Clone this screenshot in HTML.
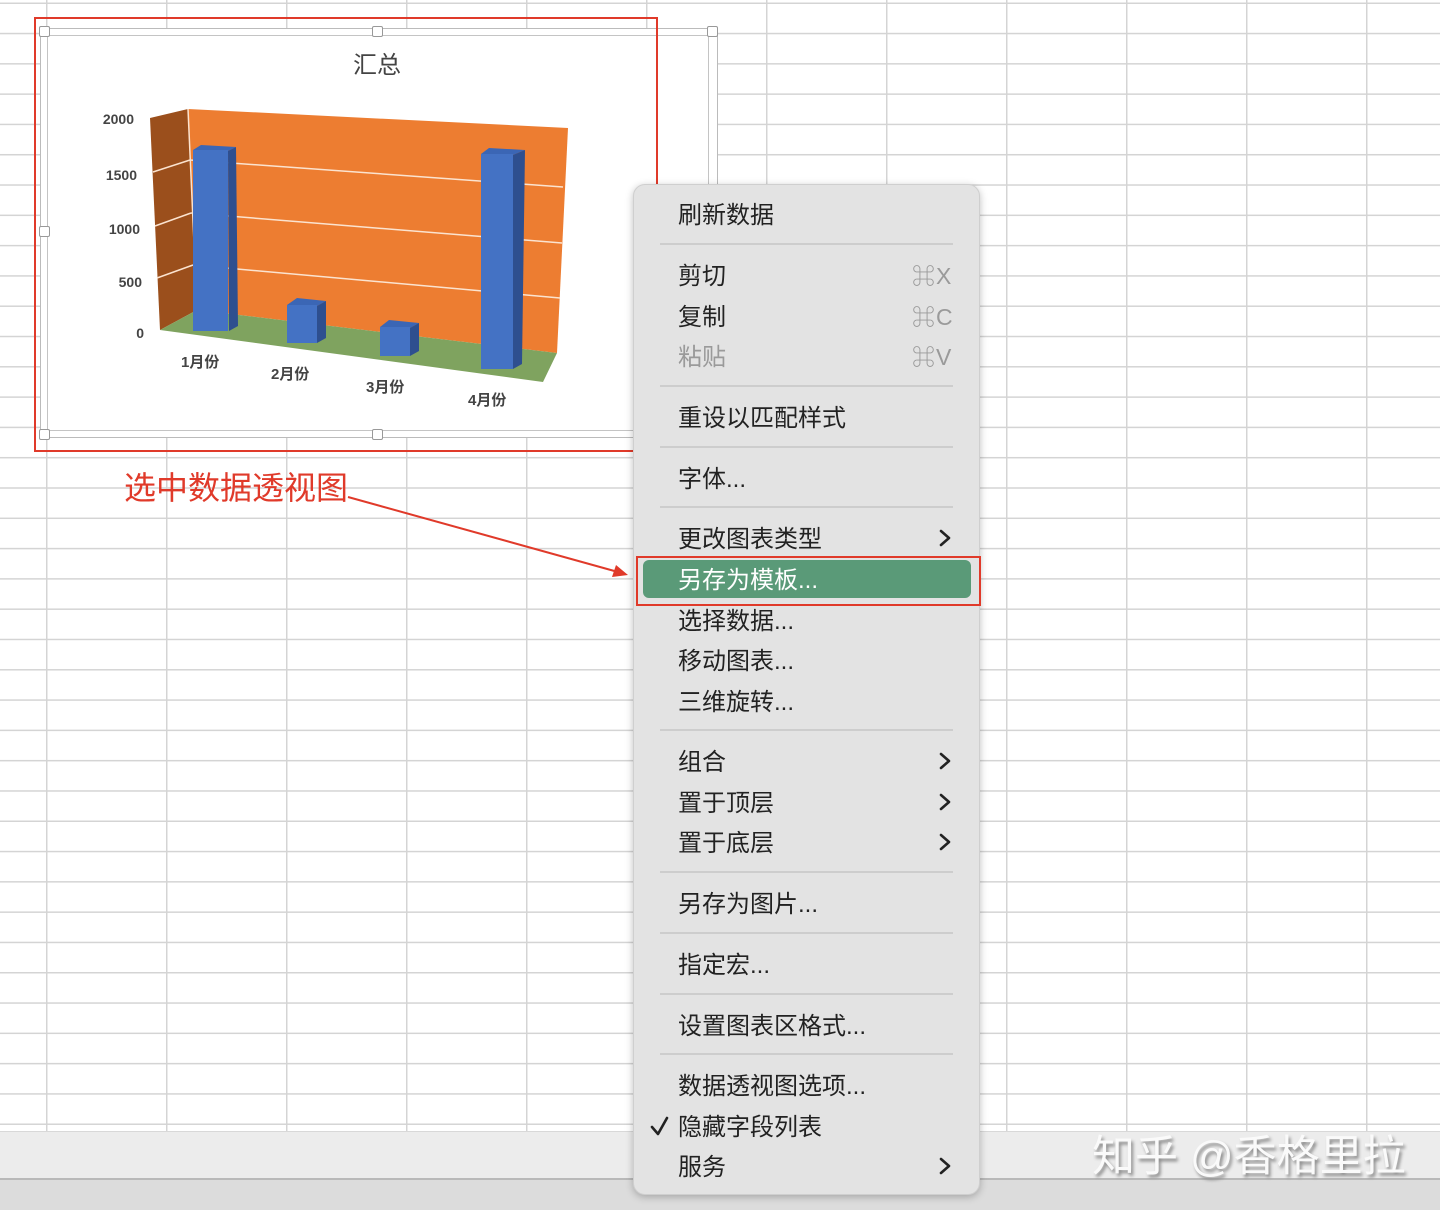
<!DOCTYPE html>
<html><head><meta charset="utf-8"><style>
*{margin:0;padding:0;box-sizing:border-box}
body{width:1440px;height:1210px;position:relative;overflow:hidden;background:#fff;font-family:"Liberation Sans","Noto Sans CJK SC",sans-serif}
.grid{position:absolute;left:0;top:0;width:1440px;height:1131px;
background-image:linear-gradient(to right,#d4d4d4 0,#d4d4d4 1.5px,transparent 1.5px),linear-gradient(to bottom,#d4d4d4 0,#d4d4d4 1.5px,transparent 1.5px);
background-size:120px 100%,100% 30.3px;background-position:46px 0,0 2.5px}
.bar1{position:absolute;left:0;top:1131px;width:1440px;height:47px;background:#ececec;border-top:1px solid #d8d8d8}
.bar2{position:absolute;left:0;top:1178px;width:1440px;height:32px;background:#dcdcdc;border-top:2px solid #b9b9b9}
.menu{position:absolute;left:633px;top:184px;width:347px;height:1011px;background:#e3e3e3;border-radius:12px;box-shadow:0 2px 8px rgba(0,0,0,.25);border:1px solid #cfcfcf}
.it{position:absolute;left:678px;font-size:24px;color:#222;line-height:34px;white-space:nowrap}
.sc{position:absolute;left:912px;font-size:23px;color:#9a9a9a;line-height:32px;letter-spacing:1px}
.sep{position:absolute;left:660px;width:293px;height:2px;background:#cdcdcd}
.h{position:absolute;width:11px;height:11px;background:#fff;border:1px solid #999;border-radius:2px}
</style></head><body>
<div class="grid"></div>
<div class="bar1"></div><div class="bar2"></div>

<div style="position:absolute;left:40px;top:28px;width:678px;height:410px;background:#fff;border:1px solid #bbb"></div>
<div style="position:absolute;left:47px;top:35px;width:662px;height:396px;border:1px solid #c4c4c4"></div>
<svg style="position:absolute;left:0;top:0" width="720" height="450">
<text x="377" y="73" font-size="24" text-anchor="middle" fill="#444" font-family="Liberation Sans,Noto Sans CJK SC,sans-serif">汇总</text>
<polygon points="150,118 188,109 197,310 160,330" fill="#9b4f1c"/>
<polygon points="188,109 568,128 557,353 197,310" fill="#ed7d31"/>
<polygon points="160,330 197,310 557,353 543,382" fill="#7fa35f"/>
<g stroke="#fbe3cf" stroke-width="1.5">
<line x1="190" y1="160" x2="563" y2="187"/><line x1="191" y1="213" x2="562" y2="243"/><line x1="193" y1="265" x2="560" y2="298"/>
<line x1="153" y1="172" x2="190" y2="160"/><line x1="155" y1="226" x2="191" y2="213"/><line x1="157" y1="278" x2="193" y2="265"/>
<line x1="188" y1="109" x2="197" y2="310"/>
</g>
<g font-size="14" font-weight="bold" fill="#444" text-anchor="end">
<text x="134" y="124">2000</text><text x="137" y="180">1500</text><text x="140" y="234">1000</text><text x="142" y="287">500</text><text x="144" y="338">0</text></g>
<g font-size="15" font-weight="bold" fill="#444" font-family="Liberation Sans,Noto Sans CJK SC,sans-serif">
<text x="181" y="367">1月份</text><text x="271" y="379">2月份</text><text x="366" y="392">3月份</text><text x="468" y="405">4月份</text></g>
<g>
<polygon points="193,150 201,145 236,147 228,151" fill="#3b66b5"/><polygon points="228,151 236,147 238,326 229,331" fill="#2e4f8f"/><rect x="193" y="150" width="35" height="181" fill="#4472c4"/>
<polygon points="287,305 297,298 326,301 317,306" fill="#3b66b5"/><polygon points="317,306 326,301 326,338 317,343" fill="#2e4f8f"/><rect x="287" y="305" width="30" height="38" fill="#4472c4"/>
<polygon points="380,327 389,320 419,323 410,328" fill="#3b66b5"/><polygon points="410,328 419,323 419,351 410,356" fill="#2e4f8f"/><rect x="380" y="327" width="30" height="29" fill="#4472c4"/>
<polygon points="481,154 489,148 525,150 513,155" fill="#3b66b5"/><polygon points="513,155 525,150 522,364 513,369" fill="#2e4f8f"/><rect x="481" y="154" width="32" height="215" fill="#4472c4"/>
</g>
</svg>
<div class="h" style="left:39px;top:26px"></div><div class="h" style="left:372px;top:26px"></div><div class="h" style="left:707px;top:26px"></div>
<div class="h" style="left:39px;top:226px"></div><div class="h" style="left:39px;top:429px"></div><div class="h" style="left:372px;top:429px"></div>
<div style="position:absolute;left:34px;top:17px;width:624px;height:435px;border:2px solid #e03a2a"></div>

<div style="position:absolute;left:124px;top:463px;font-size:32px;color:#e03a2a;white-space:nowrap;font-family:'Liberation Sans','Noto Sans CJK SC',sans-serif">选中数据透视图</div>
<svg style="position:absolute;left:0;top:0" width="700" height="600">
<line x1="348" y1="497" x2="618" y2="572" stroke="#e03a2a" stroke-width="2"/>
<polygon points="628,575 612,577 616,565" fill="#e03a2a"/>
</svg>

<div class="menu"></div>
<div style="position:absolute;left:643px;top:560px;width:328px;height:38px;background:#5a9a78;border-radius:6px"></div>
<div style="position:absolute;left:636px;top:556px;width:345px;height:50px;border:2px solid #e03a2a"></div>

<div class="it" style="top:199px">刷新数据</div>
<div class="sep" style="top:243px"></div>
<div class="it" style="top:260px">剪切</div><div class="sc" style="top:260px">⌘X</div>
<div class="it" style="top:301px">复制</div><div class="sc" style="top:301px">⌘C</div>
<div class="it" style="top:341px;color:#9a9a9a">粘贴</div><div class="sc" style="top:341px">⌘V</div>
<div class="sep" style="top:385px"></div>
<div class="it" style="top:402px">重设以匹配样式</div>
<div class="sep" style="top:446px"></div>
<div class="it" style="top:463px">字体...</div>
<div class="sep" style="top:506px"></div>
<div class="it" style="top:523px">更改图表类型</div>
<div class="it" style="top:564px;color:#fff">另存为模板...</div>
<div class="it" style="top:605px">选择数据...</div>
<div class="it" style="top:645px">移动图表...</div>
<div class="it" style="top:686px">三维旋转...</div>
<div class="sep" style="top:729px"></div>
<div class="it" style="top:746px">组合</div>
<div class="it" style="top:787px">置于顶层</div>
<div class="it" style="top:827px">置于底层</div>
<div class="sep" style="top:871px"></div>
<div class="it" style="top:888px">另存为图片...</div>
<div class="sep" style="top:932px"></div>
<div class="it" style="top:949px">指定宏...</div>
<div class="sep" style="top:993px"></div>
<div class="it" style="top:1010px">设置图表区格式...</div>
<div class="sep" style="top:1053px"></div>
<div class="it" style="top:1070px">数据透视图选项...</div>
<div class="it" style="top:1111px">隐藏字段列表</div>
<div class="it" style="top:1151px">服务</div>
<svg style="position:absolute;left:0;top:0" width="1000" height="1210">
<g fill="none" stroke="#222" stroke-width="2.6" stroke-linecap="round" stroke-linejoin="round">
<polyline points="941,531 949,538 941,545"/>
<polyline points="941,754 949,761 941,768"/>
<polyline points="941,795 949,802 941,809"/>
<polyline points="941,835 949,842 941,849"/>
<polyline points="941,1159 949,1166 941,1173"/>
<polyline points="652,1127 658,1134 667,1118"/>
</g></svg>

<div style="position:absolute;left:1092px;top:1122px;font-size:43px;color:#fafafa;text-shadow:2px 3px 3px #8a8a8a;white-space:nowrap;font-family:'Liberation Sans','Noto Sans CJK SC',sans-serif">知乎 @香格里拉</div>
</body></html>
